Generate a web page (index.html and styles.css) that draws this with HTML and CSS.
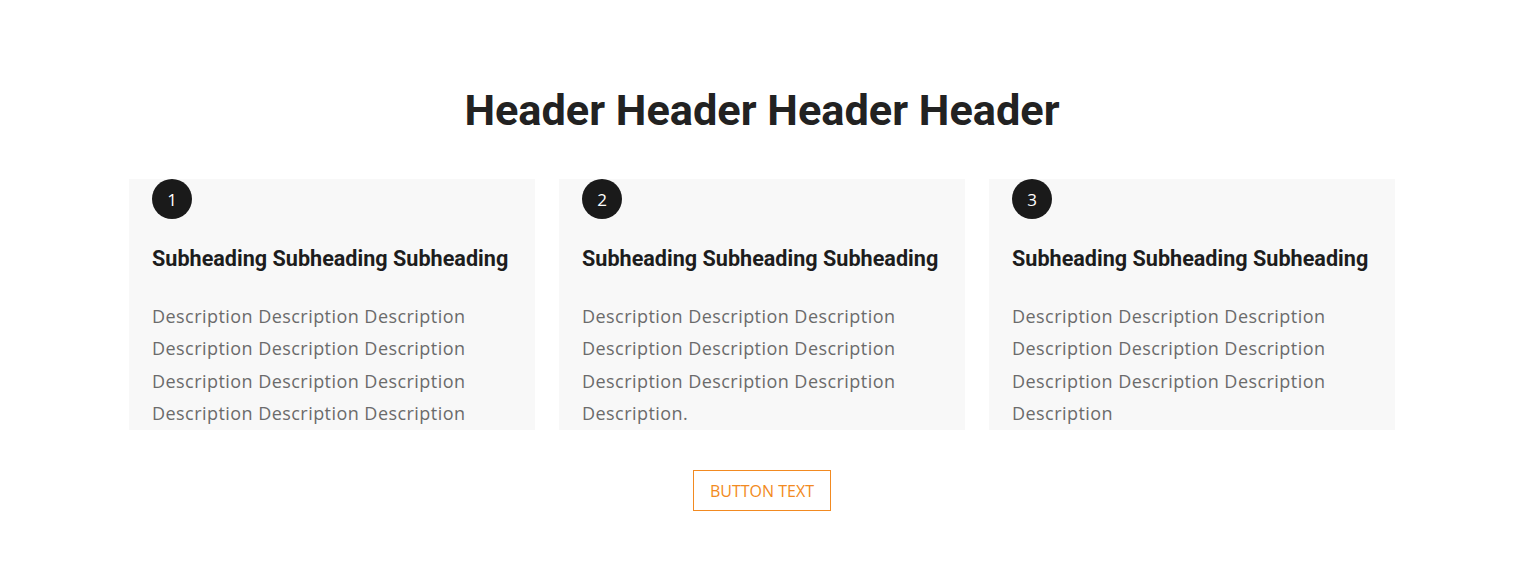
FILE: index.html
```html
<!DOCTYPE html>
<html>
<head>
<meta charset="utf-8">
<link rel="stylesheet" href="styles.css">
</head>
<body>
<section class="steps">
  <h1 class="steps-title">Header Header Header Header</h1>
  <div class="cards">
    <div class="card">
      <div class="num">1</div>
      <h3 class="card-title">Subheading Subheading Subheading</h3>
      <p class="card-text">Description Description Description Description Description Description Description Description Description Description Description Description</p>
    </div>
    <div class="card">
      <div class="num">2</div>
      <h3 class="card-title">Subheading Subheading Subheading</h3>
      <p class="card-text">Description Description Description Description Description Description Description Description Description Description.</p>
    </div>
    <div class="card">
      <div class="num">3</div>
      <h3 class="card-title">Subheading Subheading Subheading</h3>
      <p class="card-text">Description Description Description Description Description Description Description Description Description Description</p>
    </div>
  </div>
  <div class="actions">
    <a class="btn" href="#">BUTTON TEXT</a>
  </div>
</section>
</body>
</html>
```
FILE: styles.css
```css
html, body { margin: 0; padding: 0; background: #fff; }
.steps {
  padding: 84px 8px 0 0;
  display: flex;
  flex-direction: column;
  align-items: center;
}
.steps-title {
  margin: 0;
  font-family: Roboto, sans-serif;
  font-weight: 700;
  font-size: 43.3px;
  line-height: 54px;
  color: #222;
}
.cards {
  margin-top: 41px;
  display: grid;
  grid-template-columns: repeat(3, 406px);
  gap: 24px;
}
.card {
  background: #f8f8f8;
  padding: 0 23px;
  height: 251px;
  overflow: hidden;
}
.num {
  width: 40px;
  height: 40px;
  border-radius: 50%;
  background: #1a1a1a;
  color: #fff;
  font-family: "Open Sans", sans-serif;
  font-size: 17px;
  display: flex;
  align-items: center;
  justify-content: center;
}
.card-title {
  margin: 28px 0 0;
  font-family: Roboto, sans-serif;
  font-weight: 700;
  font-size: 21.6px;
  line-height: 24px;
  color: #1d1d1d;
}
.card-text {
  margin: 29px 0 0;
  font-family: "Open Sans", sans-serif;
  font-size: 18px;
  letter-spacing: 0.45px;
  line-height: 32.3px;
  color: #6b6b6b;
}
.actions {
  margin-top: 40px;
  display: flex;
  justify-content: center;
}
.btn {
  display: inline-block;
  padding: 1px 16px 0;
  height: 41px;
  line-height: 39px;
  box-sizing: border-box;
  border: 1px solid #f28a21;
  color: #f28a21;
  font-family: "Open Sans", sans-serif;
  font-size: 16px;
  text-decoration: none;
}
```
